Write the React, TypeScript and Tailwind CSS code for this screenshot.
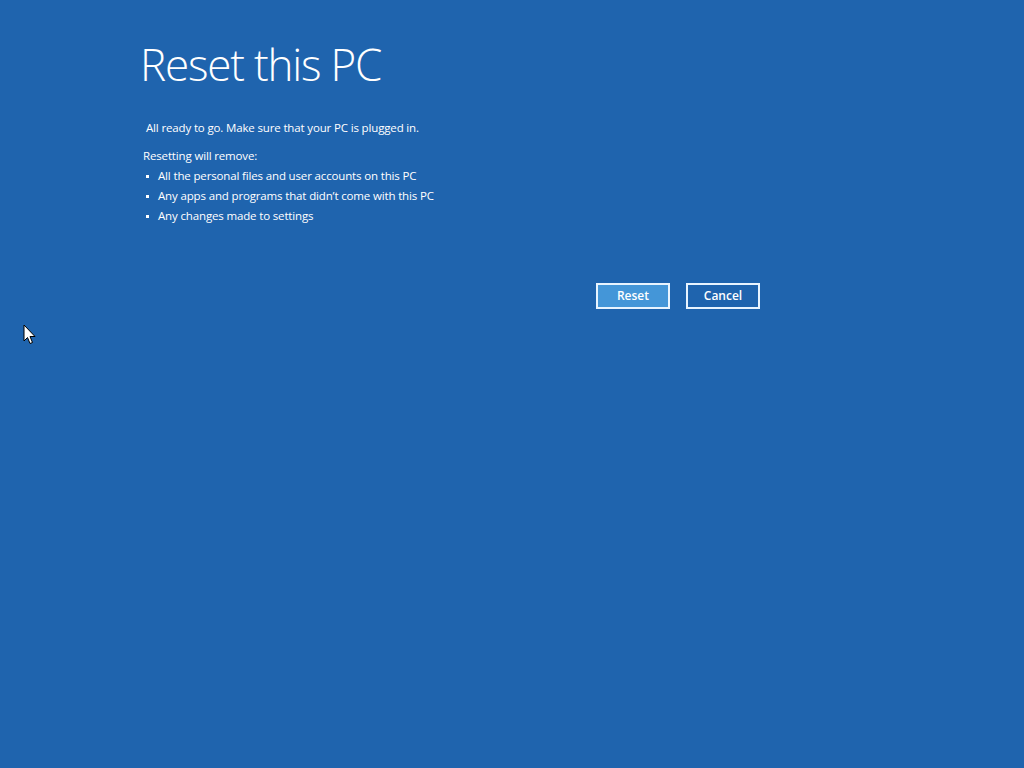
import type { ReactElement } from "react";

const removals = [
  "All the personal files and user accounts on this PC",
  "Any apps and programs that didn\u2019t come with this PC",
  "Any changes made to settings",
];

function Cursor(): ReactElement {
  return (
    <svg
      className="absolute left-[23px] top-[324px]"
      width="14"
      height="22"
      viewBox="0 0 14 22"
    >
      <path
        d="M1 1 L1 17 L4.5 13.5 L7 19.5 L9.5 18.5 L7 12.5 L12 12.5 Z"
        fill="#ffffff"
        stroke="#000000"
        strokeWidth="1"
        strokeLinejoin="round"
      />
    </svg>
  );
}

export default function App(): ReactElement {
  return (
    <main
      className="relative h-[768px] w-[1024px] overflow-hidden bg-[#1f64ae] text-white"
      style={{ fontFamily: '"Open Sans", "Noto Sans", sans-serif' }}
    >
      <div className="flex w-[760px] flex-col pl-[140px] pt-[36px]">
        <h1 className="text-[44px] font-light leading-[56px] tracking-[-1.2px]">Reset this PC</h1>
        <p className="mt-[28px] pl-[6px] text-[11.5px] leading-[16px] tracking-[-0.15px]">
          All ready to go. Make sure that your PC is plugged in.
        </p>
        <p className="mt-[12px] pl-[3px] text-[11.5px] leading-[16px] tracking-[-0.15px]">
          Resetting will remove:
        </p>
        <ul className="mt-[4px] flex flex-col gap-[4px] pl-[6px] text-[11.5px] leading-[16px] tracking-[-0.15px]">
          {removals.map((r) => (
            <li key={r} className="flex items-center gap-[9px]">
              <span className="h-[3px] w-[3px] bg-white" />
              <span>{r}</span>
            </li>
          ))}
        </ul>
        <div className="mt-[59px] flex justify-end gap-[16px]">
          <button className="h-[26px] w-[74px] border-2 border-[#e8f4ff] bg-[#4496d8] text-[12px] font-semibold">
            Reset
          </button>
          <button className="h-[26px] w-[74px] border-2 border-[#e8f4ff] bg-[#1f64ae] text-[12px] font-semibold">
            Cancel
          </button>
        </div>
      </div>
      <Cursor />
    </main>
  );
}
